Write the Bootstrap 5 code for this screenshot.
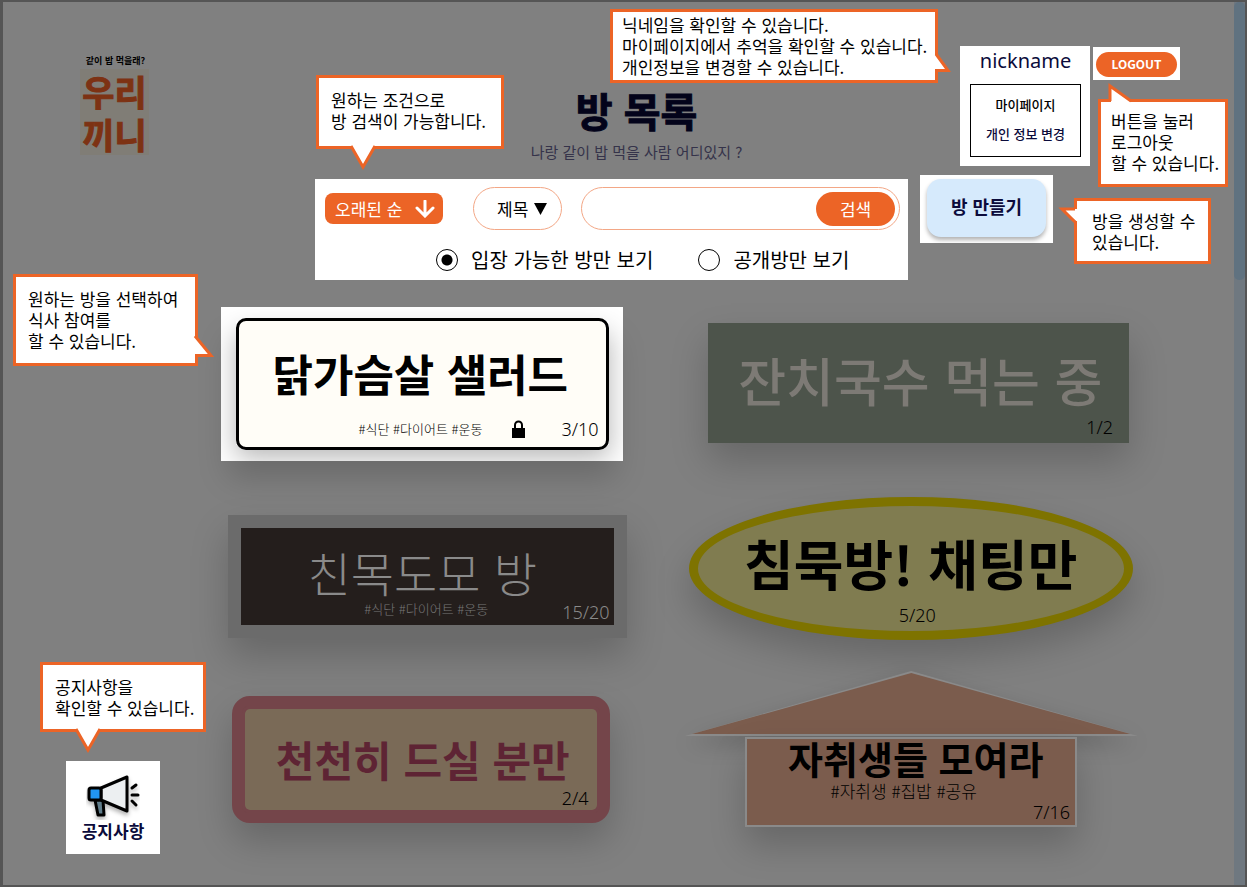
<!DOCTYPE html>
<html lang="ko">
<head>
<meta charset="utf-8">
<meta name="viewport" content="width=device-width, initial-scale=1">
<title>방 목록</title>
<link href="https://cdn.jsdelivr.net/npm/bootstrap@5.3.0/dist/css/bootstrap.min.css" rel="stylesheet">
<style>
  :root { --accent: #ec6426; --navy: #0b0b3b; }
  body { background: #808080; color: #000; font-family: "Noto Sans CJK KR", sans-serif; font-size: 17px; line-height: 21px; }
  a { color: inherit; text-decoration: none; }
  .frame { border: 3px solid #555; border-top-width: 2px; border-right-width: 2px; }
  .track { width: 11px; background: #6f7880; }
  .thumb { height: 278px; background: #607280; border-radius: 5px; }

  .top-grid { display: grid; grid-template-columns: 312px minmax(0, 1fr) 326px; }
  .logo { width: 69px; margin: 51px 0 0 77px; }
  .logo-sub { font-size: 9px; line-height: 16px; padding-left: 2px; }
  .logo-name { background: #807d76; color: #7d3213; font-size: 35px; line-height: 43px; -webkit-text-stroke: 1px #7d3213; }
  .page-title { font-size: 40px; line-height: 50px; margin: 83px 0 7px; color: #03031a; -webkit-text-stroke: 1px #03031a; }
  .page-sub { font-size: 15px; line-height: 20px; color: #35334a; margin-bottom: 17px; }
  .title-box { padding-left: 50px; }

  .panel { background: #fff; padding: 8px 8px 5px 10px; }
  .btn-accent { background: var(--accent); color: #fff; font-size: 17px; line-height: 21px; border: 0; }
  .btn-accent:hover { background: #d9561b; color: #fff; }
  .sort-btn { width: 118px; height: 31px; border-radius: 8px; padding: 0 8px 0 10px; }
  .pill { height: 43px; border: 1px solid #f3a786; border-radius: 22px; background: #fff; }
  .field-select { width: 89px; appearance: none; padding: 0 0 0 23px; font-size: 17px; color: #000; }
  .select-mark { right: 15px; top: 15px; pointer-events: none; }
  .select-box { margin: 0 19px 0 auto; }
  .search-pill { flex: 0 0 319px; padding-right: 4px; }
  .search-pill input { border: 0; background: none; outline: 0; min-width: 0; padding-left: 20px; }
  .search-btn { width: 79px; height: 34px; border-radius: 17px; }
  .filters { font-size: 20px; line-height: 30px; padding-left: 111px; margin-top: 15px; gap: 45px; }
  .filters input { appearance: none; width: 22px; height: 22px; border: 1px solid #000; border-radius: 50%; margin: 0 13px 0 0; }
  .filters input:checked { background: radial-gradient(circle, #000 0 5px, #fff 6px); }

  .account-area { padding: 44px 0 0 12px; }
  .account-row { padding-left: 40px; gap: 3px; }
  .lit { background: #fff; position: relative; }
  .account { width: 130px; height: 120px; padding: 3px 9px 9px 10px; }
  .nick { font-family: "Noto Sans", sans-serif; font-size: 20px; line-height: 24px; color: var(--navy); margin-bottom: 11px; }
  .account-menu { border: 1px solid #000; height: 73px; font-size: 13px; font-weight: 500; padding-top: 5px; line-height: 29px; }
  .logout-box { width: 87px; height: 33px; padding: 4px 3px; margin-top: 1px; }
  .logout-btn { width: 81px; height: 25px; border-radius: 13px; font-size: 12px; font-weight: 700; padding: 0 0 2px; }
  .create-box { width: 133px; height: 68px; margin-top: 9px; padding: 4px 7px; }
  .create-btn { width: 119px; height: 58px; background: #d6eafc; color: var(--navy); border: 0; border-radius: 14px; font-size: 18px; font-weight: 700; padding-bottom: 5px; box-shadow: 0 3px 4px rgba(0,0,0,.3); }

  .tip { position: absolute; z-index: 5; background: #fff; border: 3px solid var(--accent); white-space: nowrap; font-weight: 400; color: #000; text-align: left; }
  .tip svg { position: absolute; overflow: visible; fill: #fff; stroke: var(--accent); stroke-width: 3px; }
  .tip-search { left: 1px; top: -104px; width: 188px; height: 74px; padding: 11px 12px; }
  .tip-search svg { left: 32px; top: 100%; }
  .tip-nick { right: 152px; top: -37px; width: 328px; height: 74px; padding: 2px 9px; }
  .tip-nick svg { left: 100%; top: 42px; }
  .tip-logout { left: 5px; top: 52px; width: 130px; height: 88px; padding: 8px 10px; }
  .tip-logout svg { left: 9px; top: -16px; }
  .tip-create { left: 154px; top: 23px; width: 137px; height: 66px; padding: 9px 15px; }
  .tip-create svg { left: -15px; top: 8px; }
  .tip-room { right: calc(100% + 23px); top: -33px; width: 185px; height: 92px; padding: 11px 12px; }
  .tip-room svg { left: 100%; top: 59px; }
  .tip-notice { left: -26px; bottom: calc(100% + 29px); width: 166px; height: 70px; padding: 11px 12px; }
  .tip-notice svg { left: 33px; top: 100%; }

  .side { width: 218px; flex: none; padding: 0 0 31px 63px; }
  .notice { width: 94px; height: 93px; padding-top: 11px; color: var(--navy); font-weight: 700; }

  .rooms { display: grid; grid-template-columns: 406fr 453fr; column-gap: 58px; padding: 27px 97px 58px 0; flex: 1; align-items: start; }
  .room { display: flex; flex-direction: column; position: relative; box-shadow: 0 18px 36px rgba(0,0,0,.2); }
  .room-title { text-align: center; margin: 0; font-weight: 700; white-space: nowrap; }
  .tags { font-size: 13px; font-weight: 300; line-height: 20px; }
  .count { font-family: "Noto Sans", sans-serif; font-size: 18px; font-weight: 300; line-height: 22px; }
  .corner { position: absolute; right: 8px; bottom: 1px; }
  .salad-lit { margin-right: 4px; padding: 11px 14px 11px 15px; box-shadow: 0 24px 30px -8px rgba(0,0,0,.18); }
  .salad-shade { position: absolute; inset: 0; overflow: hidden; }
  .salad-shade::before { content: ""; position: absolute; inset: 14px 14px 16px 15px; box-shadow: 0 12px 26px rgba(0,0,0,.3); }
  .salad { height: 132px; border: 3px solid #000; border-radius: 10px; background: #fffdf7; box-shadow: none; padding: 24px 7px 7px; }
  .salad .room-title { font-size: 44px; line-height: 56px; padding-right: 4px; }
  .salad-foot { margin-top: auto; gap: 30px; }
  .salad-foot svg { margin-right: 6px; }
  .friends { margin: 54px 0 0 7px; height: 123px; border: 13px solid #6b6b6b; background: #241e1c; color: #8a8a8a; padding-top: 17px; }
  .friends .room-title { font-size: 47px; line-height: 54px; font-weight: 300; padding-right: 10px; }
  .friends .tags { text-align: center; color: #777; padding-right: 2px; }
  .friends .corner { right: 4px; bottom: 2px; }
  .slow { margin: 58px 17px 0 11px; height: 127px; border: 13px solid #74454a; border-radius: 18px; background: #7a6a57; padding-top: 22px; }
  .slow::before { content: ""; position: absolute; inset: -3px; border: 3px solid #74454a; border-radius: 7px; }
  .slow .room-title { font-size: 42px; line-height: 56px; color: #5e2434; padding-left: 4px; }
  .noodle { margin: 16px 8px 0 23px; height: 120px; background: #4d544b; padding-top: 29px; }
  .noodle .room-title { font-size: 52px; line-height: 56px; color: #7d7a75; font-weight: 500; padding-left: 4px; }
  .noodle .corner { right: 16px; bottom: 5px; }
  .quiet { margin: 54px 4px 0; height: 143px; border: 9px solid #7e7300; border-radius: 50%; background: #807c50; padding-top: 29px; }
  .quiet .room-title { font-size: 54px; line-height: 56px; }
  .quiet .count { text-align: center; padding: 13px 0 0 13px; }
  .house { margin-top: 31px; box-shadow: none; }
  .roof { display: block; width: 100%; height: 66px; filter: drop-shadow(0 8px 10px rgba(0,0,0,.2)); }
  .house-body { margin: 0 60px; height: 90px; border: 2px solid #8a8a8a; background: #7b5c4d; position: relative; box-shadow: 0 18px 36px rgba(0,0,0,.2); text-align: center; }
  .house .room-title { font-size: 38px; line-height: 38px; padding: 0 0 3px 10px; }
  .house .tags { font-size: 17px; line-height: 22px; padding-right: 14px; }
  .house .corner { right: 5px; bottom: 2px; }
</style>
</head>
<body>
<div class="frame d-flex min-vh-100">
  <main class="flex-grow-1 d-flex flex-column">
    <div class="top-grid">
      <a href="#" class="logo text-center fw-bold d-block">
        <div class="logo-sub">같이 밥 먹을래?</div>
        <div class="logo-name">우리<br>끼니</div>
      </a>
      <div>
        <div class="title-box text-center">
          <h1 class="page-title fw-bold">방 목록</h1>
          <p class="page-sub">나랑 같이 밥 먹을 사람 어디있지 ?</p>
        </div>
        <form class="panel position-relative">
          <div class="d-flex align-items-center">
            <button type="button" class="btn btn-accent sort-btn d-flex align-items-center justify-content-between">오래된 순
              <svg width="20" height="18" viewBox="0 0 20 18" fill="none" stroke="#fff" stroke-width="3" stroke-linecap="round" aria-hidden="true"><path d="M10 1v14M2 8l8 8 8-8"/></svg>
            </button>
            <div class="position-relative select-box">
              <select class="pill field-select" aria-label="검색 기준"><option>제목</option></select>
              <svg class="select-mark position-absolute" width="13" height="13" viewBox="0 0 13 13" aria-hidden="true"><path d="M0 1h13L6.500 13z"/></svg>
            </div>
            <div class="pill search-pill d-flex align-items-center">
              <input type="text" class="flex-grow-1" aria-label="검색어">
              <button type="button" class="btn btn-accent search-btn p-0">검색</button>
            </div>
          </div>
          <div class="filters d-flex">
            <label class="d-flex align-items-center"><input type="radio" name="filter" checked>입장 가능한 방만 보기</label>
            <label class="d-flex align-items-center"><input type="radio" name="filter">공개방만 보기</label>
          </div>
          <div class="tip tip-search">원하는 조건으로<br>방 검색이 가능합니다.
            <svg width="24" height="22"><path stroke="none" d="M1-2h22v3L12 19 1 1z"/><path fill="none" d="M0 0l12 21L24 0"/></svg>
          </div>
        </form>
      </div>
      <div class="account-area">
        <div class="account-row d-flex align-items-start">
          <div class="lit account text-center">
            <div class="nick">nickname</div>
            <div class="account-menu"><a href="#" class="d-block">마이페이지</a><a href="#" class="d-block" style="color:var(--navy)">개인 정보 변경</a></div>
            <div class="tip tip-nick">닉네임을 확인할 수 있습니다.<br>마이페이지에서 추억을 확인할 수 있습니다.<br>개인정보을 변경할 수 있습니다.
              <svg width="16" height="18"><path stroke="none" d="M-1 1h2l13 16H-1z"/><path fill="none" d="M1 0l12 16.500H0"/></svg>
            </div>
          </div>
          <div class="lit logout-box">
            <button type="button" class="btn btn-accent logout-btn">LOGOUT</button>
            <div class="tip tip-logout">버튼을 눌러<br>로그아웃<br>할 수 있습니다.
              <svg width="22" height="18"><path stroke="none" d="M1 1l19 14v3H1z"/><path fill="none" d="M0 15V0l21 15"/></svg>
            </div>
          </div>
        </div>
        <div class="lit create-box">
          <button type="button" class="create-btn">방 만들기</button>
          <div class="tip tip-create">방을 생성할 수<br>있습니다.
            <svg width="16" height="16"><path stroke="none" d="M0 0h16v12h-2z"/><path fill="none" d="M13 0H0l13 13"/></svg>
          </div>
        </div>
      </div>
    </div>

    <div class="d-flex flex-grow-1">
      <aside class="side d-flex flex-column justify-content-end">
        <a href="#" class="lit notice text-center d-block">
          <svg class="d-block mx-auto" width="54" height="48" viewBox="0 0 54 48" aria-hidden="true">
            <g stroke="#000" stroke-width="3" stroke-linejoin="round" stroke-linecap="round" style="filter:drop-shadow(0 3px 2px rgba(0,0,0,.3))">
              <path d="M9 28l3 15h6l-1-15z" fill="#607d8b"/>
              <path d="M15 16L41 5v34L15 28z" fill="#eceff1"/>
              <rect x="3" y="16" width="12" height="12" rx="2" fill="#2196f3"/>
              <path d="M46 16l4-3M46 23h6M46 29l4 4" fill="none"/>
            </g>
          </svg>
          공지사항
          <div class="tip tip-notice">공지사항을<br>확인할 수 있습니다.
            <svg width="24" height="22"><path stroke="none" d="M1-2h22v3L12 19 1 1z"/><path fill="none" d="M0 0l12 21L24 0"/></svg>
          </div>
        </a>
      </aside>

      <section class="rooms">
        <div>
          <div class="lit salad-lit">
            <div class="salad-shade"></div>
            <a href="#" class="room salad">
              <h2 class="room-title">닭가슴살 샐러드</h2>
              <div class="salad-foot d-flex align-items-center justify-content-end">
                <span class="tags">#식단 #다이어트 #운동</span>
                <svg width="13" height="18" viewBox="0 0 13 18" aria-hidden="true"><path d="M0 8h13v10H0z"/><path d="M3 9V5a3.500 3.500 0 0 1 7 0v4" fill="none" stroke="#000" stroke-width="2"/></svg>
                <span class="count">3/10</span>
              </div>
            </a>
            <div class="tip tip-room">원하는 방을 선택하여<br>식사 참여를<br>할 수 있습니다.
              <svg width="18" height="22"><path stroke="none" d="M-1 0h2l15 19H-1z"/><path fill="none" d="M0 0l16 19.500H0"/></svg>
            </div>
          </div>
          <a href="#" class="room friends">
            <h2 class="room-title">친목도모 방</h2>
            <span class="tags">#식단 #다이어트 #운동</span>
            <span class="count corner">15/20</span>
          </a>
          <a href="#" class="room slow">
            <h2 class="room-title">천천히 드실 분만</h2>
            <span class="count corner">2/4</span>
          </a>
        </div>
        <div>
          <a href="#" class="room noodle">
            <h2 class="room-title">잔치국수 먹는 중</h2>
            <span class="count corner">1/2</span>
          </a>
          <a href="#" class="room quiet">
            <h2 class="room-title">침묵방! 채팅만</h2>
            <span class="count">5/20</span>
          </a>
          <a href="#" class="room house">
            <svg class="roof" viewBox="0 0 453 66" preserveAspectRatio="none" aria-hidden="true"><path d="M226.500 0L453 65H0z" fill="#8a8a8a"/><path d="M226.500 2L446 63H7z" fill="#7b5c4d"/></svg>
            <div class="house-body">
              <h2 class="room-title">자취생들 모여라</h2>
              <div class="tags">#자취생 #집밥 #공유</div>
              <span class="count corner">7/16</span>
            </div>
          </a>
        </div>
      </section>
    </div>
  </main>
  <div class="track"><div class="thumb"></div></div>
</div>
<script src="https://cdn.jsdelivr.net/npm/bootstrap@5.3.0/dist/js/bootstrap.bundle.min.js"></script>
</body>
</html>
